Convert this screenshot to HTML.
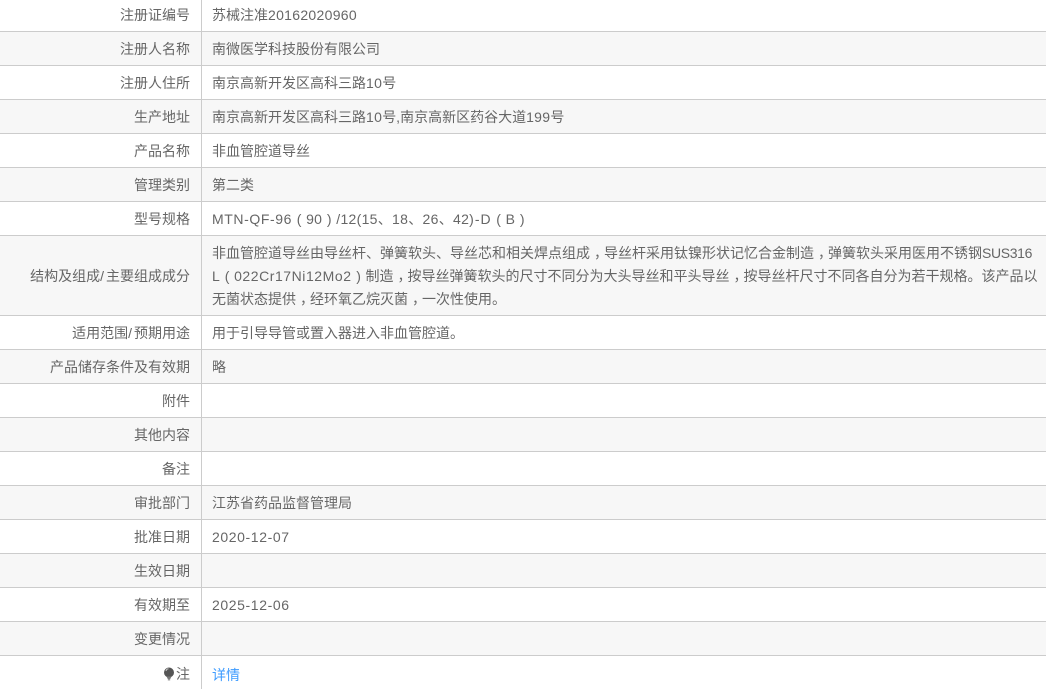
<!DOCTYPE html>
<html lang="zh">
<head>
<meta charset="utf-8">
<style>
html,body{margin:0;padding:0;background:#fff;width:1046px;height:689px;overflow:hidden}
body{font-family:"Liberation Sans","Noto Sans CJK SC",sans-serif;font-size:14px;color:#666;position:relative}
.r{position:absolute;left:0;width:1046px;height:33px;border-bottom:1px solid #ccc;line-height:33px;white-space:nowrap}
.g{background:#f7f7f7}
.l{position:absolute;left:0;top:1px;width:190px;text-align:right;height:100%}
.v{position:absolute;left:212px;top:1px}
.n{letter-spacing:.3px}
.d{letter-spacing:.6px}
.m{letter-spacing:.6px}
.s{letter-spacing:-.35px}
.w{letter-spacing:.55px}
.e{letter-spacing:1px}
.h{letter-spacing:2px}
.p{display:inline-block;width:14px;text-align:center}
.c{display:inline-block;width:14px;text-indent:4px}
.sep{position:absolute;left:201px;top:0;width:1px;height:689px;background:#ccc}
a{color:#3d9bff;text-decoration:none}
svg{vertical-align:-2px}
</style>
</head>
<body>
<div class="r" style="top:-2px"><div class="l">注册证编号</div><div class="v">苏械注准<span class="n">20162020960</span></div></div>
<div class="r g" style="top:32px"><div class="l">注册人名称</div><div class="v">南微医学科技股份有限公司</div></div>
<div class="r" style="top:66px"><div class="l">注册人住所</div><div class="v">南京高新开发区高科三路<span class="n">10</span>号</div></div>
<div class="r g" style="top:100px"><div class="l">生产地址</div><div class="v">南京高新开发区高科三路<span class="n">10</span>号,南京高新区药谷大道<span class="n">199</span>号</div></div>
<div class="r" style="top:134px"><div class="l">产品名称</div><div class="v">非血管腔道导丝</div></div>
<div class="r g" style="top:168px"><div class="l">管理类别</div><div class="v">第二类</div></div>
<div class="r" style="top:202px"><div class="l">型号规格</div><div class="v"><span class="m">MTN-QF-96</span><span class="p">(</span><span class="n">90</span><span class="p">)</span><span class="n">/12(15、18、26、42</span><span class="e">)-D</span><span class="p">(</span><span class="n">B</span><span class="p">)</span></div></div>
<div class="r g" style="top:236px;height:79px"><div class="l" style="line-height:79px">结构及组成<span class="h">/</span>主要组成成分</div><div class="v" style="line-height:23px;top:6px">非血管腔道导丝由导丝杆、弹簧软头、导丝芯和相关焊点组成<span class="c">，</span>导丝杆采用钛镍形状记忆合金制造<span class="c">，</span>弹簧软头采用医用不锈钢<span class="s">SUS316</span><br><span class="n">L</span><span class="p">(</span><span class="w">022Cr17Ni12Mo2</span><span class="p">)</span>制造<span class="c">，</span>按导丝弹簧软头的尺寸不同分为大头导丝和平头导丝<span class="c">，</span>按导丝杆尺寸不同各自分为若干规格。该产品以<br>无菌状态提供<span class="c">，</span>经环氧乙烷灭菌<span class="c">，</span>一次性使用。</div></div>
<div class="r" style="top:316px"><div class="l">适用范围<span class="h">/</span>预期用途</div><div class="v">用于引导导管或置入器进入非血管腔道。</div></div>
<div class="r g" style="top:350px"><div class="l">产品储存条件及有效期</div><div class="v">略</div></div>
<div class="r" style="top:384px"><div class="l">附件</div></div>
<div class="r g" style="top:418px"><div class="l">其他内容</div></div>
<div class="r" style="top:452px"><div class="l">备注</div></div>
<div class="r g" style="top:486px"><div class="l">审批部门</div><div class="v">江苏省药品监督管理局</div></div>
<div class="r" style="top:520px"><div class="l">批准日期</div><div class="v"><span class="d">2020-12-07</span></div></div>
<div class="r g" style="top:554px"><div class="l">生效日期</div></div>
<div class="r" style="top:588px"><div class="l">有效期至</div><div class="v"><span class="d">2025-12-06</span></div></div>
<div class="r g" style="top:622px"><div class="l">变更情况</div></div>
<div class="r" style="top:656px;border-bottom:0"><div class="l" style="line-height:34px"><svg width="12" height="14" viewBox="0 0 12 14" style="margin-right:1px"><circle cx="6" cy="5.5" r="5" fill="#555"/><path d="M3.5 9.5L5 12.5H7L8.5 9.5Z" fill="#777"/><rect x="4.8" y="12.5" width="2.4" height="1.2" fill="#bbb"/><path d="M3 4Q3.5 2 5.5 1.8" stroke="#ccc" fill="none"/></svg>注</div><div class="v" style="line-height:36px"><a href="#">详情</a></div></div>
<div class="sep"></div>
</body>
</html>
